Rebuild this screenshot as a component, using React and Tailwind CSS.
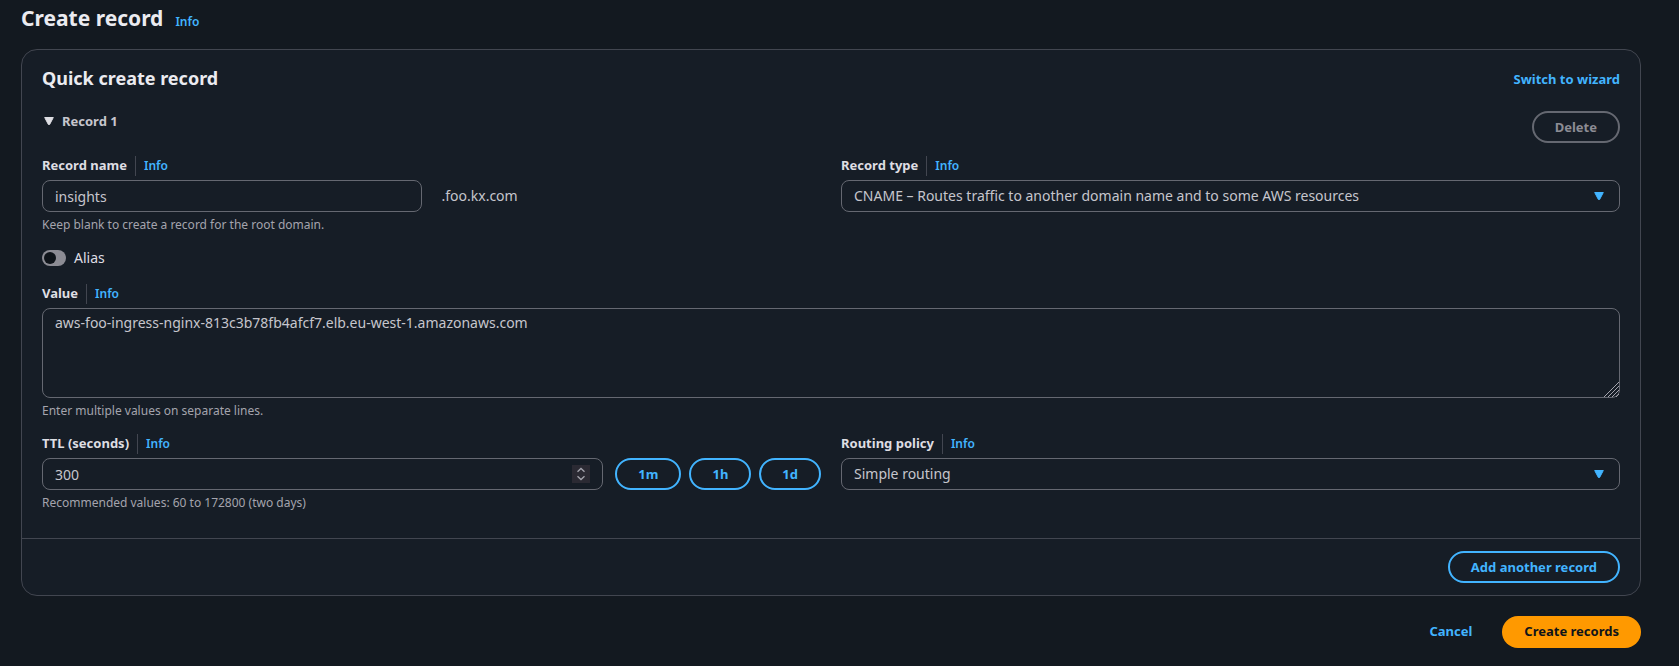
import { useState } from 'react';

const RECORD_TYPES = [
  'A – Routes traffic to an IPv4 address and some AWS resources',
  'AAAA – Routes traffic to an IPv6 address and some AWS resources',
  'CNAME – Routes traffic to another domain name and to some AWS resources',
  'MX – Specifies mail servers',
  'TXT – Used to verify email senders and for application-specific values',
];

const ROUTING_POLICIES = ['Simple routing', 'Weighted', 'Geolocation', 'Latency', 'Failover'];

const TTL_PRESETS = [
  { label: '1m', seconds: 60 },
  { label: '1h', seconds: 3600 },
  { label: '1d', seconds: 86400 },
];

const controlClass =
  'w-full rounded-lg border border-[#656871] bg-[#161d26] px-3 text-sm text-[#c6c6cd] outline-none focus:border-[#42b4ff]';

const outlineButtonClass =
  'h-8 rounded-full border-2 px-[21px] text-[13px] leading-5 font-bold';

const activeOutlineClass = 'border-[#42b4ff] text-[#42b4ff] hover:bg-[#1d2b3a]';

function InfoLink() {
  return (
    <a href="#info" className="text-xs font-semibold text-[#42b4ff] hover:underline">
      Info
    </a>
  );
}

function FieldLabel({ htmlFor, children }) {
  return (
    <div className="mb-1 flex h-5 items-center">
      <label htmlFor={htmlFor} className="text-[13px] font-bold text-[#dedee3]">
        {children}
      </label>
      <span className="mx-2 h-5 w-px bg-[#424650]" />
      <InfoLink />
    </div>
  );
}

function HelpText({ children }) {
  return <p className="mt-[6px] text-xs leading-[14px] text-[#a4a4ad]">{children}</p>;
}

function Caret({ className }) {
  return (
    <svg viewBox="0 0 10 8" className={className} aria-hidden="true">
      <path d="M.7.5h8.600L5.600 7.500h-1.200z" fill="currentColor" stroke="currentColor" strokeLinejoin="round" />
    </svg>
  );
}

function SelectField({ id, value, onChange, options }) {
  return (
    <div className="relative">
      <select
        id={id}
        value={value}
        onChange={e => onChange(e.target.value)}
        className={`${controlClass} h-8 appearance-none`}
      >
        {options.map(option => (
          <option key={option}>{option}</option>
        ))}
      </select>
      <Caret className="pointer-events-none absolute top-3 right-4 h-2 w-[10px] text-[#42b4ff]" />
    </div>
  );
}

export default function App() {
  const [name, setName] = useState('insights');
  const [type, setType] = useState(RECORD_TYPES[2]);
  const [alias, setAlias] = useState(false);
  const [value, setValue] = useState('aws-foo-ingress-nginx-813c3b78fb4afcf7.elb.eu-west-1.amazonaws.com');
  const [ttl, setTtl] = useState(300);
  const [policy, setPolicy] = useState(ROUTING_POLICIES[0]);
  const [open, setOpen] = useState(true);

  return (
    <div className="min-h-screen bg-[#131920] pr-[38px] pb-4 pl-[21px] font-['Noto_Sans',sans-serif] [color-scheme:dark]">
      <header className="flex items-baseline gap-3 pt-px pb-[13px]">
        <h1 className="text-[21px] leading-[35px] font-bold text-[#ebebf0]">Create record</h1>
        <InfoLink />
      </header>

      <section className="rounded-2xl border border-[#424650] bg-[#161d26]">
        <div className="px-5 pt-3 pb-7">
          <div className="flex h-8 items-center justify-between">
            <h2 className="text-lg font-bold text-[#ebebf0]">Quick create record</h2>
            <a href="#wizard" className="pt-1 text-[13px] font-bold text-[#42b4ff] hover:underline">
              Switch to wizard
            </a>
          </div>

          {/* Record header */}
          <div className="mt-[17px] mb-[13px] flex items-start justify-between">
            <button
              type="button"
              aria-expanded={open}
              onClick={() => setOpen(!open)}
              className="flex items-center gap-[6px] text-[13px] leading-5 font-bold text-[#c6c6cd]"
            >
              <Caret className="mx-[2px] h-2 w-[10px] text-[#dedee3]" />
              Record 1
            </button>
            <button type="button" disabled className={`${outlineButtonClass} border-[#656871] text-[#8c8c94]`}>
              Delete
            </button>
          </div>

          {open && (
            <div className="flex flex-col gap-4">
              <div className="grid grid-cols-2 gap-5">
                <div>
                  <FieldLabel htmlFor="name">Record name</FieldLabel>
                  <div className="grid grid-cols-2 items-center gap-5">
                    <input
                      id="name"
                      type="text"
                      value={name}
                      onChange={e => setName(e.target.value)}
                      className={`${controlClass} h-8`}
                    />
                    <span className="text-sm text-[#c6c6cd]">.foo.kx.com</span>
                  </div>
                  <HelpText>Keep blank to create a record for the root domain.</HelpText>
                </div>
                <div>
                  <FieldLabel htmlFor="type">Record type</FieldLabel>
                  <SelectField id="type" value={type} onChange={setType} options={RECORD_TYPES} />
                </div>
              </div>

              <label className="flex h-5 items-center gap-2 self-start text-sm text-[#dedee3]">
                <input
                  type="checkbox"
                  role="switch"
                  checked={alias}
                  onChange={e => setAlias(e.target.checked)}
                  className="h-4 w-6 appearance-none rounded-full bg-[#8c8c94] p-[2px] before:block before:size-3 before:rounded-full before:bg-[#0f141a] checked:bg-[#42b4ff] checked:before:translate-x-2"
                />
                Alias
              </label>

              <div>
                <FieldLabel htmlFor="value">Value</FieldLabel>
                <div className="relative">
                  <textarea
                    id="value"
                    rows={4}
                    value={value}
                    onChange={e => setValue(e.target.value)}
                    className={`${controlClass} block h-[90px] resize-none py-1`}
                  />
                  <svg
                    viewBox="0 0 15 15"
                    className="pointer-events-none absolute right-px bottom-px size-[15px]"
                    fill="none"
                    stroke="#a4a4ad"
                    aria-hidden="true"
                  >
                    <path d="M0 15 15 0M4 15 15 4M8 15l7-7M12 15l3-3" />
                  </svg>
                </div>
                <HelpText>Enter multiple values on separate lines.</HelpText>
              </div>

              <div className="grid grid-cols-2 gap-5">
                <div>
                  <FieldLabel htmlFor="ttl">TTL (seconds)</FieldLabel>
                  <div className="flex gap-3">
                    <div className="relative flex-1">
                      <input
                        id="ttl"
                        type="number"
                        value={ttl}
                        onChange={e => setTtl(e.target.value)}
                        className={`${controlClass} block h-8 [appearance:textfield]`}
                      />
                      <svg
                        viewBox="0 0 18 18"
                        className="pointer-events-none absolute top-[7px] right-[13px] size-[18px] bg-[#2b2a33]"
                        fill="none"
                        stroke="#a4a4ad"
                        strokeWidth="1.3"
                        aria-hidden="true"
                      >
                        <path d="M5.5 6.8 9 3.5l3.5 3.3M5.5 11.2 9 14.5l3.5-3.3" />
                      </svg>
                    </div>
                    <div className="flex gap-2">
                      {TTL_PRESETS.map(({ label, seconds }) => (
                        <button
                          key={label}
                          type="button"
                          onClick={() => setTtl(seconds)}
                          className={`${outlineButtonClass} ${activeOutlineClass}`}
                        >
                          {label}
                        </button>
                      ))}
                    </div>
                  </div>
                  <HelpText>Recommended values: 60 to 172800 (two days)</HelpText>
                </div>
                <div>
                  <FieldLabel htmlFor="policy">Routing policy</FieldLabel>
                  <SelectField id="policy" value={policy} onChange={setPolicy} options={ROUTING_POLICIES} />
                </div>
              </div>
            </div>
          )}
        </div>

        <div className="flex justify-end border-t border-[#424650] px-5 py-3">
          <button type="button" className={`${outlineButtonClass} ${activeOutlineClass}`}>
            Add another record
          </button>
        </div>
      </section>

      {/* Form actions */}
      <div className="mt-5 flex justify-end gap-2">
        <button type="button" className="h-8 px-[22px] text-[13px] font-bold text-[#42b4ff]">
          Cancel
        </button>
        <button
          type="submit"
          className="h-8 rounded-full bg-[#ff9900] px-[22px] text-[13px] font-bold text-[#0f141a] hover:bg-[#ffb347]"
        >
          Create records
        </button>
      </div>
    </div>
  );
}
